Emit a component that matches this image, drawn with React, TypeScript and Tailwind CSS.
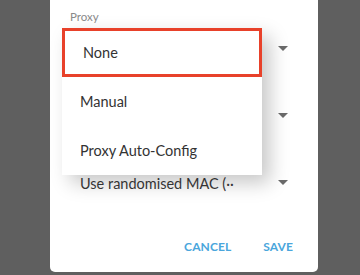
import { useState } from "react";

const options = ["None", "Manual", "Proxy Auto-Config"];

function Arrow() {
  return (
    <svg width="10" height="6" viewBox="0 0 10 6" className="shrink-0">
      <path d="M0 0 L10 0 L5 5 Z" fill="#6b6b6b" />
    </svg>
  );
}

function SelectRow({ label }: { label?: string }) {
  return (
    <div className="h-[67px] flex items-center pl-[30px] pr-[30px] justify-between">
      <span className="text-[14.5px] text-[#3a3a3a] whitespace-nowrap">{label}</span>
      <Arrow />
    </div>
  );
}

export default function App() {
  const [selected] = useState(0);
  return (
    <div
      className="w-[360px] h-[275px] bg-[#5f5f5f] overflow-hidden"
      style={{ fontFamily: "Lato, 'Open Sans', sans-serif" }}
    >
      <div className="relative ml-[50px] w-[268px] h-[272px] bg-white rounded-b-[5px] flex flex-col">
        <div className="pl-[20px] pt-[9px] text-[11.5px] text-[#8a8a8a] leading-[16px]">Proxy</div>
        {/* fields under the open menu */}
        <div className="-mt-[10px]">
          <SelectRow />
          <SelectRow />
          <div className="h-[67px] flex items-center pl-[30px] pr-[30px] justify-between">
            <span className="text-[14.5px] text-[#3a3a3a] whitespace-nowrap mt-[3px]">Use randomised MAC (··</span>
            <Arrow />
          </div>
        </div>
        <div className="flex justify-end gap-[32px] pr-[25px] mt-[22px] text-[12px] font-bold text-[#4aa6dc] tracking-[0.1px]">
          <span>CANCEL</span>
          <span>SAVE</span>
        </div>

        <div className="absolute left-[12px] top-[28px] w-[200px] bg-white shadow-[8px_8px_18px_rgba(0,0,0,0.22)]">
          {options.map((o, i) => (
            <div
              key={o}
              className={
                "h-[49px] flex items-center pl-[18px] text-[14.5px] text-[#333333] " +
                (i === selected ? "border-[3px] border-[#e8412a] pl-[15px]" : "")
              }
            >
              {o}
            </div>
          ))}
        </div>
      </div>
    </div>
  );
}
